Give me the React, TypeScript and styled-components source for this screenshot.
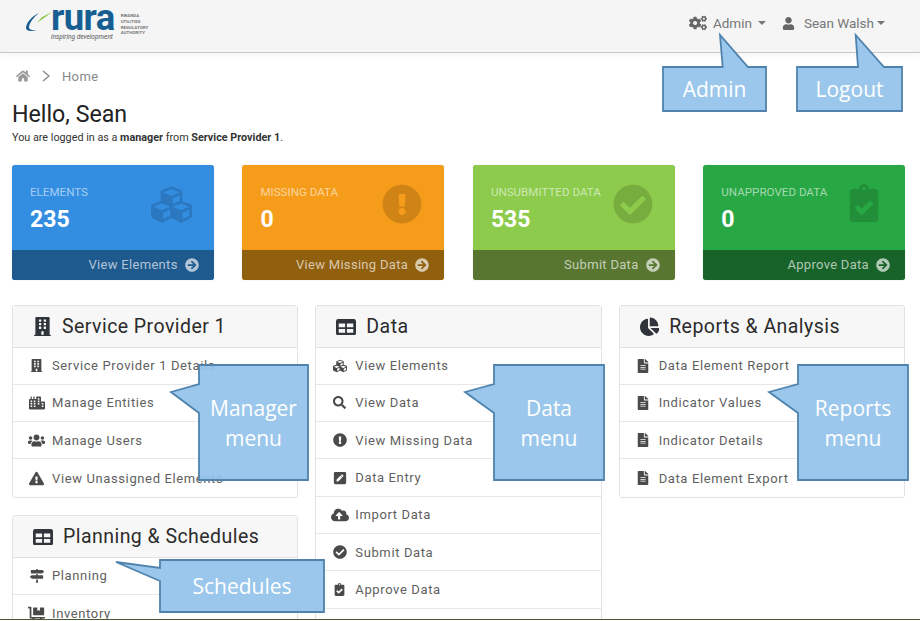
import React from "react";
import styled, { createGlobalStyle } from "styled-components";
import {
  FaCogs, FaUser, FaHome, FaCubes, FaExclamationCircle, FaCheckCircle,
  FaClipboardCheck, FaArrowCircleRight, FaBuilding, FaCity, FaUsers, FaExclamationTriangle,
  FaSearch, FaPenSquare, FaCloudUploadAlt, FaFileAlt, FaChartPie, FaMapSigns, FaDollyFlatbed,
} from "react-icons/fa";

const Global = createGlobalStyle`
  html, body { margin: 0; padding: 0; background: #fff; }
  * { box-sizing: border-box; }
  body { font-family: Roboto, "Liberation Sans", sans-serif; color: #212529; }
`;

const Page = styled.div`
  position: relative;
  height: 620px;
  overflow: hidden;
  border-bottom: 1px solid #4a5a30;
`;

const Navbar = styled.header`
  height: 53px;
  background: #f5f5f5;
  border-bottom: 1px solid #c9c9c9;
  box-shadow: 0 3px 6px rgba(0, 0, 0, 0.04);
  display: flex;
  align-items: center;
  justify-content: space-between;
  padding: 0 35px 6px 26px;
`;

const Logo = styled.div`
  display: flex;
  align-items: flex-start;
  height: 46px;
  padding-top: 3px;
`;
const Swoosh = styled.svg`
  width: 28px;
  height: 24px;
  margin-top: 6px;
  flex: none;
`;
const LogoMain = styled.div`
  display: flex;
  flex-direction: column;
  align-items: flex-start;
`;
const LogoWord = styled.span`
  font-family: Roboto, sans-serif;
  font-size: 36.5px;
  line-height: 30px;
  font-weight: 700;
  color: #175f93;
  letter-spacing: -0.6px;
  margin-left: -3px;
`;
const LogoTag = styled.span`
  font-size: 6.5px;
  line-height: 8px;
  font-style: italic;
  color: #555;
  margin-left: -3px;
  white-space: nowrap;
`;
const LogoSmall = styled.div`
  font-size: 4.4px;
  line-height: 5.8px;
  color: #777;
  font-weight: 700;
  margin: 10px 0 0 6px;
`;

const NavGroup = styled.nav`
  display: flex;
  align-items: center;
`;
const NavItem = styled.a<{ $gap: number }>`
  display: flex;
  align-items: center;
  font-size: 13.5px;
  color: #777;
  margin-left: ${(p) => p.$gap}px;
  svg { flex: none; color: #666; }
`;
const NavLabel = styled.span<{ $left: number; $right: number }>`
  margin: 0 ${(p) => p.$right}px 0 ${(p) => p.$left}px;
`;
const Caret = styled.i`
  width: 0;
  height: 0;
  border-left: 4px solid transparent;
  border-right: 4px solid transparent;
  border-top: 4px solid #777;
`;

const Content = styled.main`
  padding: 0 15px 0 12px;
`;
const Crumbs = styled.div`
  display: flex;
  align-items: center;
  height: 16px;
  margin: 15px 0 0 4px;
  color: #888;
  font-size: 13px;
  letter-spacing: 0.35px;
  svg { color: #999; }
`;
const CrumbSep = styled.svg`
  width: 8px;
  height: 12px;
  margin: 0 12px;
`;
const Title = styled.h1`
  margin: 16px 0 0;
  font-size: 23.2px;
  line-height: 28px;
  font-weight: 400;
  color: #222;
`;
const Sub = styled.p`
  margin: 3px 0 0;
  font-size: 10.8px;
  line-height: 14px;
  color: #333;
  b { font-weight: 700; }
`;

const Cards = styled.section`
  display: grid;
  grid-template-columns: repeat(4, 1fr);
  column-gap: 28.8px;
  margin-top: 20px;
`;
const Card = styled.article<{ $bg: string; $foot: string }>`
  height: 115px;
  background: ${(p) => p.$bg};
  border-radius: 3px;
  overflow: hidden;
  display: flex;
  flex-direction: column;
  box-shadow: 0 0 1px rgba(0, 0, 0, 0.3);
  footer { background: ${(p) => p.$foot}; }
`;
const CardBody = styled.div`
  flex: 1;
  display: flex;
  justify-content: space-between;
  padding: 21px 22px 0 18px;
  color: #fff;
`;
const CardLabel = styled.div`
  font-size: 11.6px;
  line-height: 13px;
  color: rgba(255, 255, 255, 0.58);
  white-space: nowrap;
`;
const CardValue = styled.div`
  font-size: 23px;
  line-height: 27px;
  font-weight: 700;
  margin-top: 7px;
`;
const CardIcon = styled.div`
  color: rgba(0, 0, 0, 0.15);
  display: flex;
  margin-top: -2px;
`;
const CardFoot = styled.footer`
  height: 30px;
  display: flex;
  justify-content: flex-end;
  align-items: center;
  padding: 0 15px 1px 0;
  font-size: 13px;
  letter-spacing: 0.3px;
  color: rgba(255, 255, 255, 0.66);
  svg { margin-left: 7px; }
`;

const Columns = styled.section`
  display: grid;
  grid-template-columns: repeat(3, 1fr);
  column-gap: 17px;
  margin-top: 25px;
  align-items: start;
`;
const Column = styled.div`
  display: flex;
  flex-direction: column;
  gap: 17.5px;
`;
const Panel = styled.div`
  border: 1px solid #e2e2e2;
  border-radius: 3px;
  background: #fff;
`;
const PanelHead = styled.h2`
  height: 41.5px;
  margin: 0;
  padding: 1px 0 0 20px;
  display: flex;
  align-items: center;
  gap: 10px;
  background: #f7f7f7;
  border-bottom: 1px solid #e2e2e2;
  font-size: 19.5px;
  font-weight: 400;
  color: #2b2b2b;
  letter-spacing: 0.45px;
  svg { flex: none; color: #2f353b; }
`;
const Row = styled.a`
  height: 37.3px;
  display: flex;
  align-items: center;
  font-size: 13px;
  letter-spacing: 0.62px;
  color: #5f5f5f;
  border-bottom: 1px solid #e8e8e8;
  &:last-child { border-bottom: none; }
`;
const RowIcon = styled.span`
  width: 39px;
  display: flex;
  justify-content: center;
  padding-left: 8px;
  color: #4a4a4a;
  flex: none;
`;

const Bubble = styled.div<{ $x: number; $y: number; $w: number; $h: number }>`
  position: absolute;
  left: ${(p) => p.$x}px;
  top: ${(p) => p.$y}px;
  width: ${(p) => p.$w}px;
  height: ${(p) => p.$h}px;
  display: flex;
  align-items: center;
  justify-content: center;
`;
const BubbleShape = styled.svg`
  position: absolute;
  inset: 0;
  width: 100%;
  height: 100%;
  overflow: visible;
`;
const BubbleText = styled.span`
  position: relative;
  font-family: "Open Sans", sans-serif;
  font-size: 21px;
  line-height: 30px;
  color: #fff;
  text-align: center;
  white-space: pre-line;
`;

function Callout({ x, y, w, h, tail, children }: {
  x: number; y: number; w: number; h: number;
  tail: { side: "top" | "left"; tip: [number, number]; a: number; b: number };
  children: string;
}) {
  const tx = tail.tip[0] - x;
  const ty = tail.tip[1] - y;
  const d =
    tail.side === "top"
      ? `M0 0 H${tail.a - x} L${tx} ${ty} L${tail.b - x} 0 H${w} V${h} H0 Z`
      : `M0 0 H${w} V${h} H0 V${tail.b - y} L${tx} ${ty} L0 ${tail.a - y} Z`;
  return (
    <Bubble $x={x} $y={y} $w={w} $h={h}>
      <BubbleShape viewBox={`0 0 ${w} ${h}`}>
        <path d={d} fill="#92c3ea" fillOpacity={0.93} stroke="#4f83ad" strokeWidth={1.8} />
      </BubbleShape>
      <BubbleText>{children}</BubbleText>
    </Bubble>
  );
}

const TableIcon = ({ size }: { size: number }) => (
  <svg width={size} height={size * 0.82} viewBox="0 0 22 18">
    <path
      fill="currentColor"
      fillRule="evenodd"
      d="M2.500 0h17A2.500 2.500 0 0 1 22 2.500v13a2.500 2.500 0 0 1-2.500 2.500h-17A2.500 2.500 0 0 1 0 15.500v-13A2.500 2.500 0 0 1 2.500 0zM3 5v4h7V5zm9 0v4h7V5zM3 11v4h7v-4zm9 0v4h7v-4z"
    />
  </svg>
);

const cards = [
  { bg: "#338ee2", foot: "#1f5a8e", label: "ELEMENTS", value: "235", link: "View Elements", icon: <FaCubes size={41} /> },
  { bg: "#f59c1a", foot: "#91600f", label: "MISSING DATA", value: "0", link: "View Missing Data", icon: <FaExclamationCircle size={40} /> },
  { bg: "#8ccb4b", foot: "#587630", label: "UNSUBMITTED DATA", value: "535", link: "Submit Data", icon: <FaCheckCircle size={40} /> },
  { bg: "#28a745", foot: "#186329", label: "UNAPPROVED DATA", value: "0", link: "Approve Data", icon: <FaClipboardCheck size={38} /> },
];

type Item = [React.ReactNode, string];
const fileIcon = <FaFileAlt size={14} />;

const manager: Item[] = [
  [<FaBuilding size={13} />, "Service Provider 1 Details"],
  [<FaCity size={16} />, "Manage Entities"],
  [<FaUsers size={17} />, "Manage Users"],
  [<FaExclamationTriangle size={15} />, "View Unassigned Elements"],
];
const planning: Item[] = [
  [<FaMapSigns size={14} />, "Planning"],
  [<FaDollyFlatbed size={17} />, "Inventory"],
];
const data: Item[] = [
  [<FaCubes size={14} />, "View Elements"],
  [<FaSearch size={13} />, "View Data"],
  [<FaExclamationCircle size={14} />, "View Missing Data"],
  [<FaPenSquare size={14} />, "Data Entry"],
  [<FaCloudUploadAlt size={18} />, "Import Data"],
  [<FaCheckCircle size={14} />, "Submit Data"],
  [<FaClipboardCheck size={13} />, "Approve Data"],
  ["", ""],
];
const reports: Item[] = [
  [fileIcon, "Data Element Report"],
  [fileIcon, "Indicator Values"],
  [fileIcon, "Indicator Details"],
  [fileIcon, "Data Element Export"],
];

const Rows = ({ items }: { items: Item[] }) => (
  <>
    {items.map(([icon, text], i) => (
      <Row key={i}>
        <RowIcon>{icon}</RowIcon>
        {text}
      </Row>
    ))}
  </>
);

export default function App() {
  return (
    <Page>
      <Global />
      <Navbar>
        <Logo>
          <Swoosh viewBox="0 0 28 24">
            <path d="M13 4C6 7 0 14 0 19c0 3 5 4 11 2-5 .5-8-.5-8-2.500C3 14 8 8 13 4z" fill="#175f93" />
            <path d="M11 14L26 3 16 8z" fill="#8cc63f" />
          </Swoosh>
          <LogoMain>
            <LogoWord>rura</LogoWord>
            <LogoTag>inspiring development</LogoTag>
          </LogoMain>
          <LogoSmall>
            RWANDA
            <br />
            UTILITIES
            <br />
            REGULATORY
            <br />
            AUTHORITY
          </LogoSmall>
        </Logo>
        <NavGroup>
          <NavItem $gap={0}>
            <FaCogs size={18} />
            <NavLabel $left={6} $right={6}>Admin</NavLabel>
            <Caret />
          </NavItem>
          <NavItem $gap={16}>
            <FaUser size={13} />
            <NavLabel $left={9} $right={3}>Sean Walsh</NavLabel>
            <Caret />
          </NavItem>
        </NavGroup>
      </Navbar>
      <Content>
        <Crumbs>
          <FaHome size={14} />
          <CrumbSep viewBox="0 0 8 12">
            <path d="M1 1l6 5-6 5" fill="none" stroke="#888" strokeWidth={1.4} />
          </CrumbSep>
          Home
        </Crumbs>
        <Title>Hello, Sean</Title>
        <Sub>
          You are logged in as a <b>manager</b> from <b>Service Provider 1</b>.
        </Sub>
        <Cards>
          {cards.map((c) => (
            <Card key={c.label} $bg={c.bg} $foot={c.foot}>
              <CardBody>
                <div>
                  <CardLabel>{c.label}</CardLabel>
                  <CardValue>{c.value}</CardValue>
                </div>
                <CardIcon>{c.icon}</CardIcon>
              </CardBody>
              <CardFoot>
                {c.link}
                <FaArrowCircleRight size={14} />
              </CardFoot>
            </Card>
          ))}
        </Cards>
        <Columns>
          <Column>
            <Panel>
              <PanelHead>
                <FaBuilding size={19} />
                Service Provider 1
              </PanelHead>
              <Rows items={manager} />
            </Panel>
            <Panel>
              <PanelHead>
                <TableIcon size={20} />
                Planning &amp; Schedules
              </PanelHead>
              <Rows items={planning} />
            </Panel>
          </Column>
          <Column>
            <Panel>
              <PanelHead>
                <TableIcon size={20} />
                Data
              </PanelHead>
              <Rows items={data} />
            </Panel>
          </Column>
          <Column>
            <Panel>
              <PanelHead>
                <FaChartPie size={19.5} />
                Reports &amp; Analysis
              </PanelHead>
              <Rows items={reports} />
            </Panel>
          </Column>
        </Columns>
      </Content>
      <Callout x={663} y={67} w={103} h={44} tail={{ side: "top", tip: [720, 35], a: 722.7, b: 748 }}>Admin</Callout>
      <Callout x={797} y={67} w={105} h={44} tail={{ side: "top", tip: [855.7, 35], a: 858, b: 884 }}>Logout</Callout>
      <Callout x={199} y={365} w={109} h={115} tail={{ side: "left", tip: [171, 392], a: 384, b: 413 }}>{"Manager\nmenu"}</Callout>
      <Callout x={494} y={365} w={110} h={115} tail={{ side: "left", tip: [465, 392], a: 384, b: 413 }}>{"Data\nmenu"}</Callout>
      <Callout x={798} y={365} w={110} h={115} tail={{ side: "left", tip: [769, 392], a: 384, b: 413 }}>{"Reports\nmenu"}</Callout>
      <Callout x={160} y={560} w={164} h={52} tail={{ side: "left", tip: [116, 562], a: 568, b: 581 }}>Schedules</Callout>
    </Page>
  );
}
